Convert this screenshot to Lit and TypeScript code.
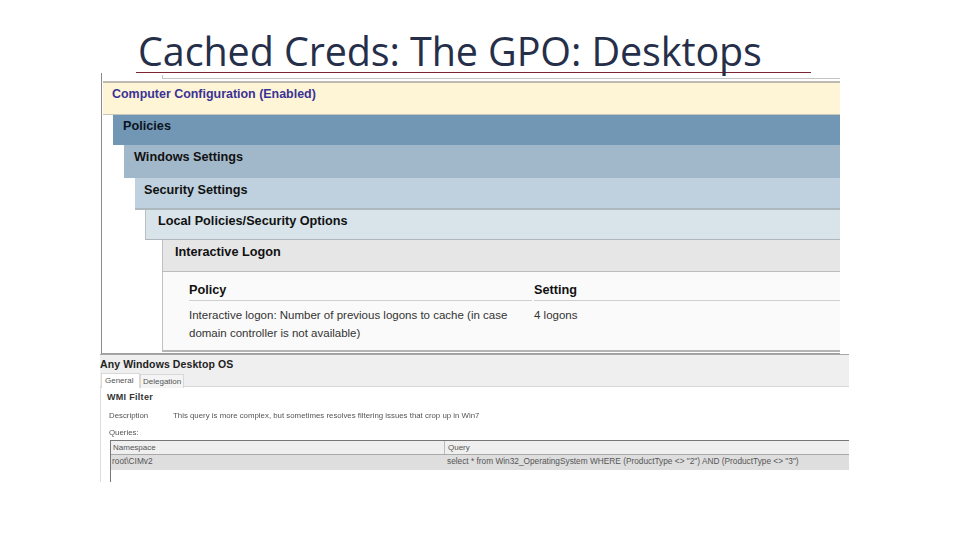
import { LitElement, html, css } from "lit";
import { customElement } from "lit/decorators.js";

@customElement("app-root")
export class AppRoot extends LitElement {
  static styles = css`
    :host { display: block; width: 960px; height: 540px; background: #fff; overflow: hidden; font-family: "Liberation Sans", Arial, sans-serif; }
    .title { height: 72px; box-sizing: border-box; padding: 23px 0 0 138px; font: 400 39.5px/56px "Open Sans", sans-serif; color: #252f4a; white-space: nowrap; letter-spacing: -0.1px; }
    .rule { height: 1px; width: 675px; margin-left: 136px; background: #7d2435; }

    .shot { margin-left: 101px; width: 739px; height: 281px; box-sizing: border-box; border-left: 1px solid #8c8c8c; border-bottom: 1px solid #a0a0a0; padding-top: 2px; }
    .topline { height: 4px; margin-left: 60px; border-bottom: 1px solid #c4c4c4; border-left: 1px solid #c4c4c4; box-sizing: border-box; }
    .sec { box-sizing: border-box; font-weight: bold; font-size: 12.7px; line-height: 16px; color: #111; white-space: nowrap; }
    .cc { margin: 2px 0 0 1px; height: 34px; background: #fdf5d5; border-top: 2px solid #bdbab0; border-bottom: 1px solid #c8c6b8; color: #3c3296; padding: 3px 0 0 9px; font-size: 12.45px; }
    .n1 { margin-left: 11px; height: 30px; background: #7197b5; padding: 3px 0 0 10px; color: #0c1320; }
    .n2 { margin-left: 22px; height: 33px; background: #a1b8cb; padding: 4px 0 0 10px; }
    .n3 { margin-left: 33px; height: 32px; background: #bfd1de; border-bottom: 2px solid #aeb8bf; padding: 4px 0 0 9px; }
    .n4 { margin-left: 43px; height: 30px; background: #d8e3ea; border-bottom: 1px solid #b0b6ba; border-left: 1px solid #b8c0c6; padding: 3px 0 0 12px; }
    .n5 { margin-left: 60px; height: 32px; background: #e6e6e6; border-bottom: 1px solid #bbb; border-left: 1px solid #c0c0c0; padding: 4px 0 0 12px; }
    .body { margin-left: 60px; height: 80px; box-sizing: border-box; background: #fafafa; border-left: 1px solid #c0c0c0; border-bottom: 2px solid #b4b4b4; padding: 9px 0 0 26px; font-size: 11.5px; color: #333; }
    .grid { display: grid; grid-template-columns: 343px 1fr; column-gap: 2px; }
    .th { font-weight: bold; font-size: 12.7px; line-height: 19px; color: #111; border-bottom: 1px solid #d0d0d0; height: 20px; box-sizing: border-box; }
    .td { line-height: 18px; padding-top: 5px; }

    .shot2 { margin-left: 100px; width: 749px; }
    .head { height: 33px; box-sizing: border-box; background: #efefef; border-top: 1px solid #a8a8a8; border-bottom: 1px solid #d8d8d8; }
    .name { font-weight: bold; font-size: 10.5px; line-height: 13px; padding-top: 3px; letter-spacing: 0.1px; color: #222; }
    .tabs { display: flex; margin: 2px 0 0 1px; font-size: 8px; color: #555; }
    .tab { line-height: 14px; box-sizing: border-box; border: 1px solid #d8d8d8; border-bottom: none; }
    .tab.on { width: 39px; height: 15px; padding-left: 3px; background: #fff; }
    .tab.off { width: 44px; height: 14px; margin-top: 1px; padding-left: 2px; background: #f4f4f4; }
    .panel { height: 95px; box-sizing: border-box; border-left: 1px solid #ddd; padding: 4px 0 0 6px; font-size: 7.85px; color: #555; }
    .wmi { font-weight: bold; color: #333; font-size: 9px; line-height: 12px; letter-spacing: 0.3px; }
    .desc { display: flex; margin: 7px 0 0 2px; line-height: 12px; filter: blur(0.25px); }
    .desc .k { width: 64px; }
    .q { margin: 5px 0 0 2px; line-height: 12px; filter: blur(0.25px); }
    .tbl { margin: 1px 0 0 3px; height: 42px; box-sizing: border-box; border-top: 1px solid #777; border-left: 1px solid #777; }
    .row { display: grid; grid-template-columns: 333px 1fr; line-height: 13px; }
    .row.h { height: 14px; background: #efefef; border-bottom: 1px solid #aaa; box-sizing: border-box; font-size: 8px; }
    .row.h span + span { border-left: 1px solid #bbb; padding-left: 3px; }
    .row.d { height: 15px; background: #dedede; font-size: 8.3px; }
    .row.h span:first-child { padding-left: 2px; }
    .row.d span:first-child { padding-left: 1px; }
    .row.d span + span { padding-left: 3px; }
  `;

  render() {
    return html`
      <div class="title">Cached Creds: The GPO: Desktops</div>
      <div class="rule"></div>
      <div class="shot">
        <div class="topline"></div>
        <div class="sec cc">Computer Configuration (Enabled)</div>
        <div class="sec n1">Policies</div>
        <div class="sec n2">Windows Settings</div>
        <div class="sec n3">Security Settings</div>
        <div class="sec n4">Local Policies/Security Options</div>
        <div class="sec n5">Interactive Logon</div>
        <div class="body">
          <div class="grid">
            <div class="th">Policy</div>
            <div class="th">Setting</div>
            <div class="td">Interactive logon: Number of previous logons to cache (in case<br />domain controller is not available)</div>
            <div class="td">4 logons</div>
          </div>
        </div>
      </div>
      <div class="shot2">
        <div class="head">
          <div class="name">Any Windows Desktop OS</div>
          <div class="tabs">
            <div class="tab on">General</div>
            <div class="tab off">Delegation</div>
          </div>
        </div>
        <div class="panel">
          <div class="wmi">WMI Filter</div>
          <div class="desc">
            <span class="k">Description</span>
            <span>This query is more complex, but sometimes resolves filtering issues that crop up in Win7</span>
          </div>
          <div class="q">Queries:</div>
          <div class="tbl">
            <div class="row h"><span>Namespace</span><span>Query</span></div>
            <div class="row d"><span>root\\CIMv2</span><span>select * from Win32_OperatingSystem WHERE (ProductType &lt;&gt; "2") AND (ProductType &lt;&gt; "3")</span></div>
          </div>
        </div>
      </div>
    `;
  }
}
